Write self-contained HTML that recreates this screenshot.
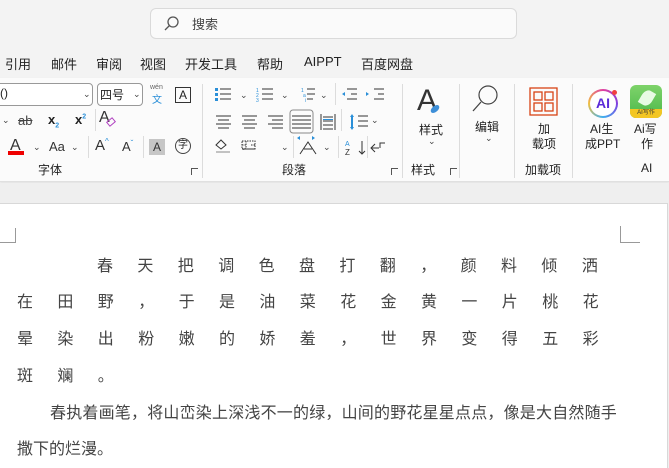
<!DOCTYPE html>
<html><head><meta charset="utf-8"><style>
*{margin:0;padding:0;box-sizing:border-box}
body{width:669px;height:468px;overflow:hidden;background:#f3f3f3;font-family:"Liberation Sans","Noto Sans CJK SC",sans-serif;color:#222;position:relative}
.a{position:absolute;white-space:nowrap}
.t{font-size:13px}
.s{font-size:12px}
.chev{font-size:9px;color:#444}
.sep{position:absolute;width:1px;background:#dcdcdc}
.ln{position:absolute;left:17px;font-size:16px;color:#444;letter-spacing:24.4px;white-space:nowrap}
svg{position:absolute}
</style></head><body>
<div class="a" style="left:150px;top:8px;width:367px;height:31px;background:#fafafa;border:1px solid #dadada;border-radius:6px"></div>
<svg style="left:162px;top:15px" width="18" height="18" viewBox="0 0 18 18"><circle cx="11" cy="7" r="5" fill="none" stroke="#555" stroke-width="1.3"/><path d="M7.5 10.5L3 15" stroke="#555" stroke-width="1.3"/></svg>
<div class="a t" style="left:192px;top:14px;color:#444">搜索</div>
<div class="a t" style="left:5px;top:54px">引用</div>
<div class="a t" style="left:51px;top:54px">邮件</div>
<div class="a t" style="left:96px;top:54px">审阅</div>
<div class="a t" style="left:140px;top:54px">视图</div>
<div class="a t" style="left:185px;top:54px">开发工具</div>
<div class="a t" style="left:257px;top:54px">帮助</div>
<div class="a t" style="left:304px;top:54px">AIPPT</div>
<div class="a t" style="left:361px;top:54px">百度网盘</div>
<div class="a" style="left:0;top:78px;width:669px;height:104px;background:#fbfbfb;border-bottom:1px solid #e0e0e0;box-shadow:0 1px 2px rgba(0,0,0,.08)"></div>
<div class="a" style="left:-8px;top:83px;width:101px;height:23px;border:1px solid #999;border-radius:4px;background:#fff"></div>
<div class="a s" style="left:0;top:86px">()</div>
<div class="a chev" style="left:83px;top:89px">⌄</div>
<div class="a" style="left:97px;top:83px;width:46px;height:23px;border:1px solid #999;border-radius:4px;background:#fff"></div>
<div class="a s" style="left:100px;top:86px">四号</div>
<div class="a chev" style="left:133px;top:89px">⌄</div>
<div class="a" style="left:150px;top:84px;font-size:7px;color:#666">wén</div>
<div class="a" style="left:152px;top:91px;font-size:10px;color:#2a8fd8">文</div>
<div class="a" style="left:175px;top:87px;width:16px;height:16px;border:1px solid #333;font-size:12px;text-align:center;line-height:15px">A</div>
<div class="a chev" style="left:2px;top:115px">⌄</div>
<div class="a" style="left:18px;top:113px;font-size:13px;color:#444;text-decoration:line-through">ab</div>
<div class="a" style="left:48px;top:112px;font-size:13px;font-weight:bold">x<sub style="font-size:7px;color:#2a8fd8">2</sub></div>
<div class="a" style="left:75px;top:112px;font-size:13px;font-weight:bold">x<sup style="font-size:7px;color:#2a8fd8">2</sup></div>
<div class="a" style="left:99px;top:109px;font-size:16px;color:#333">A</div>
<div class="a" style="left:107px;top:119px;width:8px;height:6px;border:1.5px solid #b040c0;transform:rotate(-40deg)"></div>
<div class="sep" style="left:95px;top:109px;height:22px"></div>
<div class="a" style="left:10px;top:137px;font-size:16px;color:#333">A</div>
<div class="a" style="left:8px;top:151px;width:16px;height:4px;background:#e00"></div>
<div class="a chev" style="left:33px;top:142px">⌄</div>
<div class="a" style="left:49px;top:139px;font-size:13px;color:#333">Aa</div>
<div class="a chev" style="left:71px;top:142px">⌄</div>
<div class="sep" style="left:88px;top:136px;height:22px"></div>
<div class="a" style="left:95px;top:137px;font-size:15px;color:#333">A<span style="font-size:8px;color:#2a8fd8;vertical-align:top">^</span></div>
<div class="a" style="left:122px;top:139px;font-size:13px;color:#333">A<span style="font-size:8px;color:#2a8fd8;vertical-align:top">ˇ</span></div>
<div class="sep" style="left:143px;top:136px;height:22px"></div>
<div class="a" style="left:149px;top:139px;width:16px;height:16px;background:#c6c6c6;font-size:12px;text-align:center;line-height:16px;color:#333">A</div>
<div class="a" style="left:175px;top:138px;width:16px;height:16px;border:1.3px solid #444;border-radius:50%;font-size:10px;text-align:center;line-height:14px">字</div>
<div class="a s" style="left:38px;top:161px">字体</div>
<div class="a" style="left:191px;top:168px;width:7px;height:7px;border-left:1px solid #555;border-top:1px solid #555;font-size:6px"></div>
<div class="sep" style="left:202px;top:84px;height:94px"></div>
<svg style="left:213px;top:86px" width="180" height="72" viewBox="0 0 180 72">
 <g stroke="#333" stroke-width="1" fill="none">
  <path d="M7 3h11M7 8h11M7 13h11"/><path d="M49 3h11M49 8h11M49 13h11"/><path d="M94 3h8M94 8h8M94 13h6"/>
  <path d="M134 3h10M138 8h6M134 13h10M161 3h10M165 8h6M161 13h10"/>
  <path d="M3 30h15M5 34h11M3 38h15M5 42h11"/>
  <path d="M29 30h15M31 34h11M29 38h15M31 42h11"/>
  <path d="M55 30h15M59 34h11M55 38h15M59 42h11"/>
  <path d="M82 30h14M82 34h14M82 38h14M82 42h14"/>
  <path d="M108 28v16M122 28v16M110 31h10M110 35h10M110 39h10M110 43h10"/>
  <path d="M145 30h10M145 35h10M145 40h10"/>
  <path d="M29 55h13v8h-13zM33 55v8M38 59h4M29 59h4" stroke-dasharray="1.5 1"/>
  <path d="M29 63h13"/>
  <path d="M87 68l8-12 8 12M91 63h8"/>
  <path d="M149 55v13M146 65l3 3 3-3M166 62h-8M162 58l-4 4 4 4M167 62v-5h5"/>
  <path d="M3 59l5-5 5 5-5 4z"/><path d="M3 66h14" stroke="#888"/>
 </g>
 <g fill="#2a8fd8">
  <rect x="2" y="2" width="3" height="3"/><rect x="2" y="7" width="3" height="3"/><rect x="2" y="12" width="3" height="3"/>
  <text x="43" y="6" font-size="5">1</text><text x="43" y="11" font-size="5">2</text><text x="43" y="16" font-size="5">3</text>
  <text x="88" y="6" font-size="5">1</text><text x="90" y="11" font-size="5">a</text><text x="92" y="16" font-size="5">i</text>
  <path d="M129 8l3-2v4zM156 8l-3-2v4z"/>
  <path d="M110 33h10v1h-10z"/>
  <path d="M139 28l2 3h-4zM139 44l2-3h-4zM138 31h2v10h-2z"/>
  <text x="132" y="60" font-size="7">A</text>
  <path d="M84 52l3-2v4zM102 52l-3-2v4z"/>
 </g>
 <rect x="77" y="24" width="23" height="23" rx="3" fill="none" stroke="#888"/>
 <path d="M79 30h19M79 34h19M79 38h19M79 42h19" stroke="#333"/>
 <text x="132" y="69" font-size="8" fill="#333">Z</text>
</svg>
<div class="a chev" style="left:240px;top:90px">⌄</div>
<div class="a chev" style="left:281px;top:90px">⌄</div>
<div class="a chev" style="left:320px;top:90px">⌄</div>
<div class="a chev" style="left:371px;top:115px">⌄</div>
<div class="a chev" style="left:240px;top:142px">⌄</div>
<div class="a chev" style="left:281px;top:142px">⌄</div>
<div class="a chev" style="left:323px;top:142px">⌄</div>
<div class="sep" style="left:335px;top:83px;height:22px"></div>
<div class="sep" style="left:341px;top:109px;height:22px"></div>
<div class="sep" style="left:293px;top:136px;height:22px"></div>
<div class="sep" style="left:338px;top:136px;height:22px"></div>
<div class="sep" style="left:367px;top:136px;height:22px"></div>
<div class="a s" style="left:282px;top:161px">段落</div>
<div class="a" style="left:391px;top:168px;width:7px;height:7px;border-left:1px solid #555;border-top:1px solid #555"></div>
<div class="sep" style="left:402px;top:84px;height:94px"></div>
<div class="a" style="left:417px;top:84px;font-size:30px;color:#333;font-weight:300">A</div>
<div class="a" style="left:430px;top:106px;width:10px;height:6px;background:#3d8fd8;border-radius:50%;transform:rotate(-40deg)"></div>
<div class="a s" style="left:419px;top:121px">样式</div>
<div class="a chev" style="left:428px;top:136px">⌄</div>
<div class="a s" style="left:411px;top:161px">样式</div>
<div class="a" style="left:450px;top:168px;width:7px;height:7px;border-left:1px solid #555;border-top:1px solid #555"></div>
<div class="sep" style="left:459px;top:84px;height:94px"></div>
<svg style="left:471px;top:84px" width="32" height="32"><circle cx="17" cy="11" r="9" fill="none" stroke="#444" stroke-width="1.2"/><path d="M10 18L2 27" stroke="#444" stroke-width="1.3"/></svg>
<div class="a s" style="left:475px;top:118px">编辑</div>
<div class="a chev" style="left:485px;top:133px">⌄</div>
<div class="sep" style="left:514px;top:84px;height:94px"></div>
<svg style="left:529px;top:87px" width="30" height="30"><g fill="none" stroke="#d84315" stroke-width="1.3"><rect x="1" y="1" width="27" height="27"/><rect x="5" y="5" width="8" height="8"/><rect x="16" y="5" width="8" height="8"/><rect x="5" y="16" width="8" height="8"/><rect x="16" y="16" width="8" height="8"/></g></svg>
<div class="a s" style="left:538px;top:120px">加</div>
<div class="a s" style="left:532px;top:135px">载项</div>
<div class="a s" style="left:525px;top:161px">加载项</div>
<div class="sep" style="left:572px;top:84px;height:94px"></div>
<div class="a" style="left:588px;top:89px;width:30px;height:29px;border-radius:50%;background:conic-gradient(#e040a0,#8040e0,#40b0f0,#f0c040,#e040a0);padding:2px"><div style="width:100%;height:100%;border-radius:50%;background:#fff;text-align:center;font-weight:bold;font-size:14px;line-height:25px;color:#5a2ad8">AI</div></div>
<div class="a" style="left:612px;top:90px;width:5px;height:5px;border-radius:50%;background:#f04040"></div>
<div class="a s" style="left:590px;top:120px">AI生</div>
<div class="a s" style="left:585px;top:135px">成PPT</div>
<div class="a" style="left:630px;top:85px;width:32px;height:33px;border-radius:6px;background:linear-gradient(#7ed36a,#4cb84a);overflow:hidden"><div style="position:absolute;left:0;bottom:0;width:100%;height:9px;background:#f3c623;font-size:6px;text-align:center;line-height:9px;color:#333">AI写作</div><div style="position:absolute;left:11px;top:5px;width:12px;height:16px;border-radius:50% 0;background:#e8fbe4;transform:rotate(30deg)"></div></div>
<div class="a s" style="left:634px;top:120px">Ai写</div>
<div class="a s" style="left:641px;top:135px">作</div>
<div class="a s" style="left:641px;top:161px">AI</div>
<div class="a" style="left:0;top:183px;width:669px;height:285px;background:#efefef"></div>
<div class="a" style="left:0;top:203px;width:668px;height:265px;background:#fff;border-top:1px solid #d8d8d8;border-right:1px solid #d8d8d8"></div>
<div class="a" style="left:0;top:242px;width:16px;height:1px;background:#999"></div>
<div class="a" style="left:15px;top:228px;width:1px;height:15px;background:#999"></div>
<div class="a" style="left:620px;top:242px;width:20px;height:1px;background:#999"></div>
<div class="a" style="left:620px;top:226px;width:1px;height:17px;background:#999"></div>
<div class="ln" style="left:97px;top:252px">春天把调色盘打翻，颜料倾洒</div>
<div class="ln" style="top:288px">在田野，于是油菜花金黄一片桃花</div>
<div class="ln" style="top:325px">晕染出粉嫩的娇羞，世界变得五彩</div>
<div class="ln" style="top:362px">斑斓。</div>
<div class="a" style="left:50px;top:399px;font-size:16px;color:#444;letter-spacing:0.2px">春执着画笔，将山峦染上深浅不一的绿，山间的野花星星点点，像是大自然随手</div>
<div class="a" style="left:17px;top:435px;font-size:16px;color:#444">撒下的烂漫。</div>
</body></html>
